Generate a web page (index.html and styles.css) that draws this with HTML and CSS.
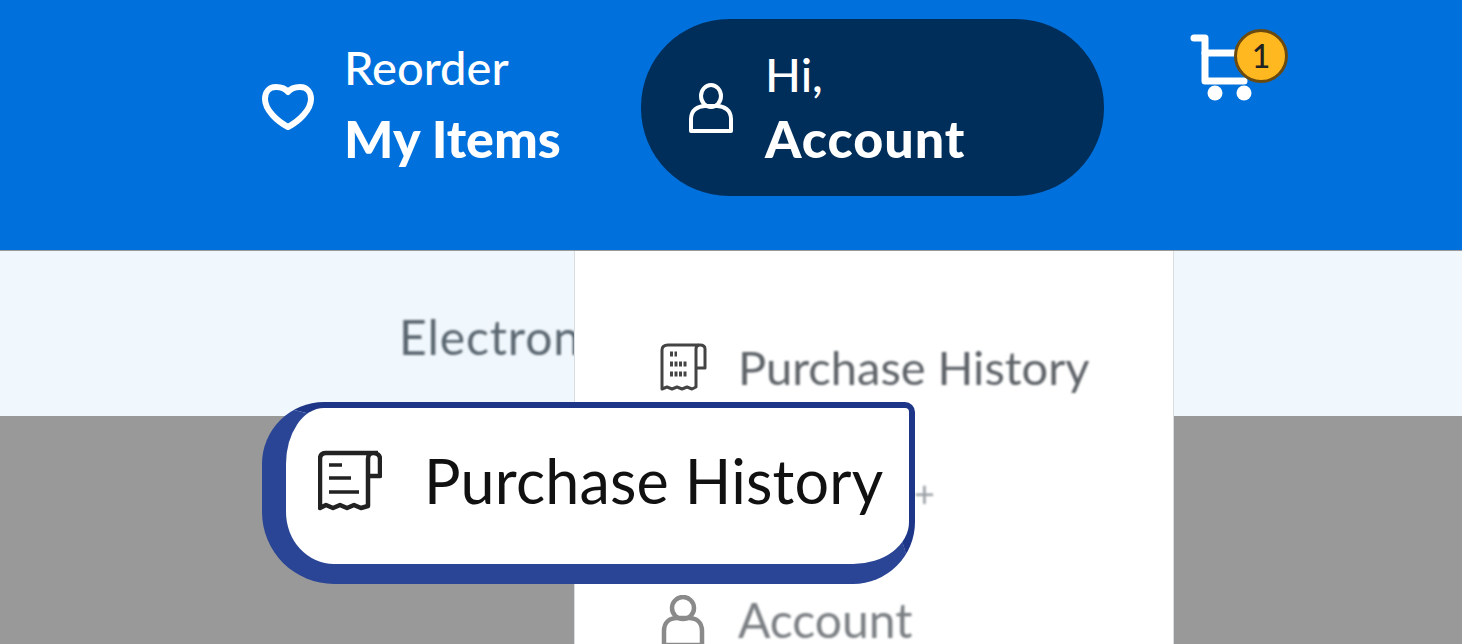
FILE: index.html

```html
<!DOCTYPE html>
<html lang="en">
<head>
  <meta charset="UTF-8" />
  <title>Purchase History</title>
  <link rel="stylesheet" href="styles.css">
</head>
<body>

<header class="top-bar">
  <a class="nav-item reorder" href="#">
    <svg class="heart-icon" viewBox="0 0 52 46" fill="none" stroke="currentColor" stroke-width="6" stroke-linejoin="round">
      <path d="M26 8C23 4 19 3 14 3C7 3 3 8 3 15C3 26 15 37 26 43C37 37 49 26 49 15C49 8 45 3 38 3C33 3 29 4 26 8Z"/>
    </svg>
    <span class="nav-text">
      <span class="nav-small">Reorder</span>
      <span class="nav-big">My Items</span>
    </span>
  </a>

  <a class="nav-item account-pill" href="#">
    <svg class="user-icon" viewBox="0 0 44 50" fill="none" stroke="currentColor" stroke-width="4" stroke-linejoin="round">
      <ellipse cx="22" cy="13" rx="10" ry="11"/>
      <path d="M2 48V36C2 27 9 23 16 23H28C35 23 42 27 42 36V48Z"/>
    </svg>
    <span class="nav-text">
      <span class="nav-small">Hi,</span>
      <span class="nav-big">Account</span>
    </span>
  </a>

  <a class="cart" href="#">
    <svg class="cart-icon" viewBox="0 0 64 70" fill="none" stroke="currentColor" stroke-width="7" stroke-linecap="round" stroke-linejoin="round">
      <path d="M4 6H15V49H54"/>
      <path d="M15 21H50"/>
      <circle cx="25" cy="61" r="7.5" fill="currentColor" stroke="none"/>
      <circle cx="54" cy="61" r="7.5" fill="currentColor" stroke="none"/>
    </svg>
    <span class="cart-badge">1</span>
  </a>
</header>

<nav class="sub-nav">
  <span class="sub-link">Electronics</span>
</nav>

<div class="page-body"></div>

<div class="account-menu">
  <a class="menu-row row-history" href="#">
    <svg class="menu-icon" viewBox="0 0 48 50" fill="none" stroke="#444" stroke-width="3" stroke-linejoin="round">
      <path d="M40 3H9C5 3 3 5 3 8V47L8 45L13 47L18 45L23 47L28 45L33 47L37 45V7C37 4 39 3 41 3C44 3 46 4 46 7V26H37"/>
      <path d="M11 12H18M11 22H29M11 32H29" stroke-width="5" stroke-dasharray="3 1.5"/>
    </svg>
    <span class="menu-label">Purchase History</span>
  </a>
  <span class="menu-plus">+</span>
  <a class="menu-row row-account" href="#">
    <svg class="menu-icon" viewBox="0 0 44 50" fill="none" stroke="#8a8a8a" stroke-width="4.5">
      <ellipse cx="22" cy="13" rx="11" ry="11"/>
      <path d="M3 50V36C3 27 9 23 16 23H28C35 23 41 27 41 36V50Z"/>
    </svg>
    <span class="menu-label label-account">Account</span>
  </a>
</div>

<a class="callout" href="#">
  <svg class="callout-icon" viewBox="0 0 64 62" fill="none" stroke="#222" stroke-width="4.5" stroke-linejoin="round">
    <path d="M60 3H8C4 3 2 5 2 9V58L8 55L15 58L22 55L29 58L36 55L43 58L50 56V9C50 5 52 3 55 3C59 3 62 5 62 9V26H50"/>
    <path d="M11 15H24M11 28H33M11 42H41" stroke-width="3.5"/>
  </svg>
  <span class="callout-label">Purchase History</span>
</a>

</body>
</html>
```

FILE: styles.css

```css
html, body {
  height: 100%;
}

body {
  margin: 0;
  position: relative;
  height: 644px;
  overflow: hidden;
  display: flex;
  flex-direction: column;
  font-family: Lato, 'Noto Sans', sans-serif;
  background-color: #999;
}

a {
  color: inherit;
  text-decoration: none;
}

.top-bar {
  height: 250px;
  flex-shrink: 0;
  display: flex;
  align-items: flex-start;
  padding-left: 262px;
  box-sizing: border-box;
  background-color: #0071dc;
  color: #fff;
}

.nav-item {
  display: flex;
  align-items: center;
}

.nav-text {
  display: flex;
  flex-direction: column;
}

.nav-small {
  font-size: 47px;
  line-height: 70px;
  font-weight: 500;
}

.nav-big {
  font-size: 52px;
  line-height: 72px;
  font-weight: 900;
}

.reorder {
  margin-top: 32px;
  width: 379px;
}

.heart-icon {
  width: 52px;
  height: 46px;
  margin: 8px 30px 0 0;
}

.account-pill {
  margin-top: 19px;
  width: 463px;
  height: 177px;
  box-sizing: border-box;
  padding-left: 48px;
  border-radius: 88px;
  background-color: #002e5a;
}

.account-pill .nav-small {
  line-height: 60px;
}

.account-pill .nav-big {
  line-height: 68px;
  letter-spacing: 1px;
}

.user-icon {
  width: 44px;
  height: 50px;
  margin-right: 32px;
}

.cart {
  position: relative;
  margin: 32px 0 0 86px;
  width: 98px;
  height: 66px;
}

.cart-icon {
  width: 64px;
  height: 70px;
}

.cart-badge {
  position: absolute;
  top: -3px;
  left: 44px;
  width: 48px;
  height: 48px;
  border: 3px solid #6b4a10;
  border-radius: 50%;
  background-color: #ffb81f;
  color: #222;
  font-size: 32px;
  font-weight: 500;
  line-height: 48px;
  text-align: center;
}

.sub-nav {
  height: 165px;
  margin-top: 1px;
  flex-shrink: 0;
  box-sizing: border-box;
  padding: 59px 0 0 399px;
  background-color: #f1f8fd;
  white-space: nowrap;
  overflow: hidden;
}

.sub-link {
  font-size: 48px;
  line-height: 54px;
  letter-spacing: 0.9px;
  color: #5a6670;
  filter: blur(1.2px);
  display: inline-block;
}

.page-body {
  flex: 1;
  background-color: #999;
}

/* dropdown under the account pill */
.account-menu {
  position: absolute;
  top: 251px;
  left: 574px;
  width: 600px;
  bottom: 0;
  box-sizing: border-box;
  border-left: 1px solid #d8dde2;
  border-right: 1px solid #d8dde2;
  background-color: #fff;
  overflow: hidden;
}

.menu-row {
  position: absolute;
  left: 84px;
  display: flex;
  align-items: center;
}

.row-history {
  top: 91px;
}

.row-account {
  top: 344px;
}

.menu-plus {
  position: absolute;
  top: 222px;
  left: 339px;
  font-size: 36px;
  line-height: 40px;
  color: #9aa0a5;
  filter: blur(1.2px);
}

.menu-icon {
  width: 48px;
  height: 50px;
  margin-right: 31px;
}

.menu-label {
  font-size: 47px;
  line-height: 50px;
  color: #5e6368;
  white-space: nowrap;
  filter: blur(1.2px);
}

.label-account {
  font-size: 48px;
  line-height: 44px;
  color: #7b7f83;
}

/* zoomed highlight over the page */
.callout {
  position: absolute;
  top: 402px;
  left: 262px;
  width: 653px;
  height: 182px;
  box-sizing: border-box;
  display: flex;
  align-items: center;
  padding: 0 0 10px 32px;
  border-style: solid;
  border-width: 6px 6px 20px 24px;
  border-color: #2a4596;
  border-top-color: #1d3687;
  border-right-color: #1d3687;
  border-radius: 62px 10px 62px 72px;
  background-color: #fff;
}

.callout-icon {
  width: 64px;
  height: 62px;
  margin-right: 42px;
  flex-shrink: 0;
}

.callout-label {
  font-size: 61px;
  line-height: 70px;
  letter-spacing: 0.2px;
  color: #111;
  white-space: nowrap;
}
```
